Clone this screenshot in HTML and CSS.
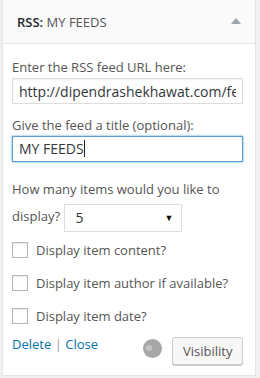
FILE: index.html
```html
<!DOCTYPE html>
<html lang="en">
<head>
    <meta charset="UTF-8">
    <title>RSS Widget</title>
    <link rel="stylesheet" href="styles.css">
</head>
<body>
    <div class="widget">
        <div class="widget-top">
            <h3><strong>RSS:</strong> <span class="in-title">MY FEEDS</span></h3>
            <span class="toggle"></span>
        </div>
        <div class="widget-inside">
            <label class="field-label" for="rss-url">Enter the RSS feed URL here:</label>
            <input class="text-input" type="text" id="rss-url" value="http://dipendrashekhawat.com/feed">

            <label class="field-label" for="rss-title">Give the feed a title (optional):</label>
            <div class="text-input focused">MY FEEDS<span class="caret"></span></div>

            <p class="items-row">How many items would you like to display?
                <span class="select">5<span class="select-arrow">&#9660;</span></span>
            </p>

            <div class="check-row"><span class="checkbox"></span>Display item content?</div>
            <div class="check-row"><span class="checkbox"></span>Display item author if available?</div>
            <div class="check-row"><span class="checkbox"></span>Display item date?</div>

            <div class="widget-actions">
                <div class="links"><a href="#">Delete</a> <span class="sep">|</span> <a href="#">Close</a></div>
                <span class="spinner"></span>
                <button class="button">Visibility</button>
            </div>
        </div>
    </div>
</body>
</html>
```

FILE: styles.css
```css
body {
    margin: 0;
    background: #f1f1f1;
    font-family: "Open Sans", Arial, sans-serif;
    font-size: 13px;
    line-height: 18px;
    color: #444;
}
.widget {
    margin: -1px 0 0 2px;
    width: 254px;
    height: 377px;
    box-sizing: border-box;
    border: 1px solid #e5e5e5;
    background: #fff;
    box-shadow: 0 1px 1px rgba(0,0,0,0.04);
}
.widget-top {
    height: 44px;
    box-sizing: border-box;
    border-bottom: 1px solid #e5e5e5;
    background: #fafafa;
    display: flex;
    align-items: center;
    justify-content: space-between;
    padding: 0 14px 0 14px;
}
.widget-top h3 {
    margin: 0;
    font-size: 13px;
    font-weight: 400;
    color: #23282d;
}
.widget-top strong {
    font-weight: 600;
}
.in-title {
    color: #555;
}
.toggle {
    width: 0;
    height: 0;
    border-left: 5px solid transparent;
    border-right: 5px solid transparent;
    border-bottom: 6px solid #a0a5aa;
    margin-top: -2px;
}
.widget-inside {
    padding: 14px 12px 0 9px;
}
.field-label {
    display: block;
    color: #555;
    margin-bottom: 2px;
}
.text-input {
    display: block;
    width: 100%;
    height: 26px;
    box-sizing: border-box;
    margin: 0 0 12px 0;
    padding: 2px 6px;
    border: 1px solid #ddd;
    box-shadow: inset 0 1px 2px rgba(0,0,0,0.07);
    font-family: "Open Sans", Arial, sans-serif;
    font-size: 14px;
    color: #32373c;
    background: #fff;
    line-height: 20px;
    outline: none;
}
.focused {
    border-color: #5b9dd9;
    box-shadow: 0 0 2px rgba(30,140,190,0.8);
    margin-bottom: 14px;
}
.caret {
    display: inline-block;
    width: 1px;
    height: 17px;
    background: #222;
    vertical-align: -3px;
}
.items-row {
    margin: 0 0 9px 0;
    color: #555;
    line-height: 27px;
}
.select {
    display: inline-flex;
    align-items: center;
    justify-content: space-between;
    width: 118px;
    height: 28px;
    box-sizing: border-box;
    padding: 0 8px 0 10px;
    margin-left: 1px;
    border: 1px solid #ddd;
    vertical-align: middle;
    font-size: 14px;
    line-height: 20px;
    color: #32373c;
    background: #fff;
}
.select-arrow {
    font-size: 9px;
    color: #111;
}
.check-row {
    display: flex;
    align-items: center;
    height: 18px;
    margin-bottom: 15px;
    color: #555;
}
.checkbox {
    width: 16px;
    height: 16px;
    box-sizing: border-box;
    border: 1px solid #b4b9be;
    box-shadow: inset 0 1px 2px rgba(0,0,0,0.1);
    margin-right: 8px;
    background: #fff;
}
.widget-actions {
    display: flex;
    align-items: flex-start;
    margin-top: -5px;
}
.links {
    flex: 1;
}
.links a {
    color: #0073aa;
    text-decoration: none;
}
.sep {
    color: #999;
}
.spinner {
    position: relative;
    width: 19px;
    height: 19px;
    border-radius: 50%;
    background: #a7a7a7;
    margin: 4px 10px 0 0;
}
.spinner::after {
    content: "";
    position: absolute;
    left: 3px;
    top: 6px;
    width: 6px;
    height: 6px;
    border-radius: 50%;
    background: #c4c4c4;
}
.button {
    height: 28px;
    margin-top: 2px;
    padding: 0 10px 2px;
    border: 1px solid #ccc;
    border-radius: 3px;
    background: #f7f7f7;
    box-shadow: 0 1px 0 #ccc;
    color: #555;
    font-family: "Open Sans", Arial, sans-serif;
    font-size: 13px;
    line-height: 26px;
    width: 71px;
}
```
